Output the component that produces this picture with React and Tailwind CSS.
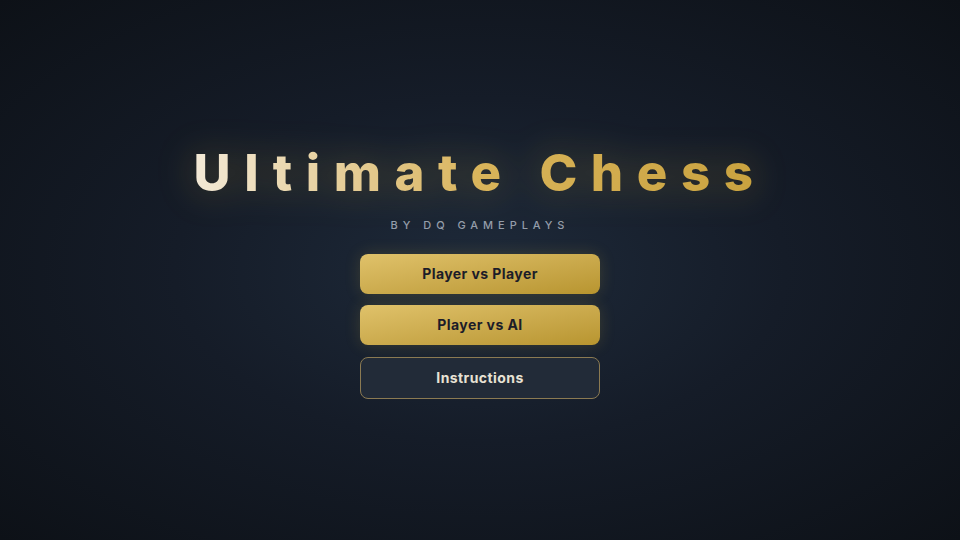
export default function App() {
  return (
    <div
      className="w-full h-screen flex flex-col items-center justify-center pt-[6px] bg-[radial-gradient(ellipse_at_center,#1e2a3a_0%,#151c28_45%,#0d1117_100%)]"
      style={{ fontFamily: 'Inter, "Liberation Sans", sans-serif' }}
    >
      <h1 className="text-[51px] leading-none font-extrabold tracking-[0.265em] bg-gradient-to-r from-[#f3e9d6] via-[#d9b45a] to-[#c9a23e] bg-clip-text text-transparent drop-shadow-[0_0_18px_rgba(212,175,55,0.35)]">
        Ultimate Chess
      </h1>
      <p className="mt-[22px] text-[11px] leading-none font-medium tracking-[0.45em] text-[#949daa]">
        BY DQ GAMEPLAYS
      </p>
      <div className="mt-[23px] flex flex-col gap-[11px] w-[240px]">
        <button className="h-[40px] rounded-lg bg-gradient-to-br from-[#e0c26a] to-[#b8952f] text-[#1c1c28] text-sm font-bold tracking-[0.03em] shadow-[0_0_16px_rgba(212,175,55,0.18)]">
          Player vs Player
        </button>
        <button className="h-[40px] rounded-lg bg-gradient-to-br from-[#e0c26a] to-[#b8952f] text-[#1c1c28] text-sm font-bold tracking-[0.03em] shadow-[0_0_16px_rgba(212,175,55,0.18)]">
          Player vs AI
        </button>
        <button className="h-[42px] mt-px rounded-lg bg-[#222b38] border border-[#8b7a52] text-[#e8e2d4] text-sm font-bold tracking-[0.03em]">
          Instructions
        </button>
      </div>
    </div>
  )
}
